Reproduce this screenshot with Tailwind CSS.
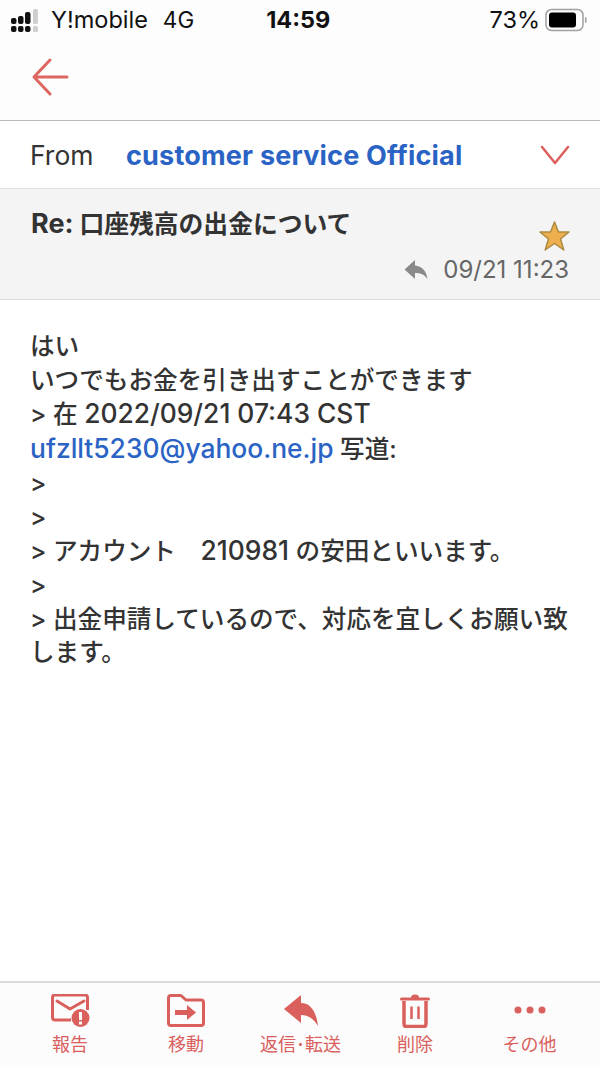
<!DOCTYPE html>
<html lang="ja"><head><meta charset="utf-8">
<script src="https://cdn.jsdelivr.net/npm/@tailwindcss/browser@4"></script>
</head>
<body class="m-0 bg-white">
<div class="w-[600px] h-[1065px] flex flex-col overflow-hidden bg-white text-[#333] font-['Inter','Noto_Sans_CJK_JP',sans-serif]">
  <div class="h-[121px] shrink-0 bg-[#fdfdfd] border-b border-[#b8b8b8] flex flex-col">
    <div class="h-[40px] relative flex items-center text-[#111]">
      <div class="ml-[11px] mt-[1px] w-[27px] shrink-0">
        <svg width="27" height="24" viewBox="0 0 27 24"><g fill="#111"><rect x="0" y="9" width="5.500" height="6" rx="2"/><rect x="0" y="17" width="5.500" height="6" rx="2"/><rect x="7" y="7" width="5.500" height="8" rx="2"/><rect x="7" y="17" width="5.500" height="6" rx="2"/><rect x="14" y="3" width="5.500" height="12" rx="2"/><rect x="14" y="17" width="5.500" height="6" rx="2"/></g><rect x="22" y="0" width="5" height="15" rx="1.500" fill="#cfcfcf"/><rect x="22" y="17" width="5" height="6" rx="1.500" fill="#cfcfcf"/></svg>
      </div>
      <span class="ml-[13px] text-[23.500px] leading-none">Y!mobile</span>
      <span class="ml-[15px] text-[22.500px] leading-none">4G</span>
      <span class="ml-[72px] text-[23.500px] leading-none font-bold">14:59</span>
      <span class="ml-auto text-[23.500px] leading-none">73%</span>
      <svg class="ml-[5px] mr-[11px]" width="44" height="24" viewBox="0 0 44 24"><rect x="1" y="1.500" width="37" height="21" rx="5.500" fill="none" stroke="#a0a0a0" stroke-width="1.500"/><rect x="4" y="4.500" width="27" height="15" rx="3" fill="#000"/><rect x="40" y="9" width="1.500" height="6" rx="0.750" fill="#a0a0a0"/></svg>
    </div>
    <div class="pl-[31px] pt-[17px]">
      <svg width="40" height="40" viewBox="0 0 40 40" fill="none" stroke="#dd6660" stroke-width="3" stroke-linecap="round" stroke-linejoin="round"><path d="M3 20H36M19 3L3 20L19 37"/></svg>
    </div>
  </div>
  <div class="h-[68px] shrink-0 bg-white border-b border-[#e0e0e0] flex items-center pl-[30px] pr-[30px] pt-[1px]">
    <span class="w-[96px] text-[26.500px] leading-none text-[#333]">From</span>
    <span class="text-[27px] leading-none font-bold text-[#2a63c4] tracking-[0.2px]">customer service Official</span>
    <svg class="ml-auto" width="30" height="20" viewBox="0 0 30 20" fill="none" stroke="#dd5f5c" stroke-width="2.500" stroke-linecap="round" stroke-linejoin="round"><path d="M2 2L15 18L28 2"/></svg>
  </div>
  <div class="h-[111px] shrink-0 bg-[#f4f4f4] border-b border-[#dcdcdc] flex flex-col pl-[31px] pr-[31px]">
    <div class="flex items-start">
      <span class="mt-[18px] text-[24.800px] leading-[33px] font-bold text-[#333]"><span class="text-[27px]">Re:</span> 口座残高の出金について</span>
      <svg class="ml-auto mt-[31px] -mr-[1px]" width="31" height="32" viewBox="0 0 31 32"><path d="M15.500 2L19.500 12H30L21.500 19L24.800 30L15.500 23.500L6.200 30L9.500 19L1 12H11.500Z" fill="#eeb04f" stroke="#ac8a40" stroke-width="1.500" stroke-linejoin="round"/></svg>
    </div>
    <div class="flex items-center justify-end mt-[3px]">
      <svg class="mr-[15px]" width="24" height="22" viewBox="0 0 24 22"><path d="M0.500 10.500L11 1V6.500C18 7 22.500 12 23.500 20C20.500 15.500 16.500 14 11 14V20Z" fill="#8a8a8a"/></svg>
      <span class="text-[24px] leading-[30px] text-[#666]">09/21 11:23</span>
    </div>
  </div>
  <div class="flex-1 pt-[30px] pl-[30px] pr-[28px] text-[24.600px] leading-[33.700px] font-medium text-[#333]">
    <div>はい</div>
    <div>いつでもお金を引き出すことができます</div>
    <div>&gt; 在 <span class="text-[26.400px]">2022/09/21 07:43 CST</span></div>
    <div><span class="text-[26.400px] text-[#2a63c4]">ufzllt5230@yahoo.ne.jp</span> 写道:</div>
    <div>&gt;</div>
    <div>&gt;</div>
    <div>&gt; アカウント　<span class="text-[26.400px]">210981</span> の安田といいます。</div>
    <div>&gt;</div>
    <div>&gt; 出金申請しているので、対応を宜しくお願い致します。</div>
  </div>
  <div class="h-[84px] shrink-0 bg-[#fcfcfc] border-t-2 border-[#dadada] flex text-[#d9605c] text-[18px] leading-[22px]">
    <div class="w-[140px] flex flex-col items-center pt-[11px]">
      <svg class="h-[34px] ml-[1px]" width="40" height="34" viewBox="0 0 40 34" fill="none"><path d="M20 26H4C2.500 26 1.500 25 1.500 23.500V3.500C1.500 2 2.500 1 4 1H34C35.500 1 36.500 2 36.500 3.500V16" stroke="#d9605c" stroke-width="3"/><path d="M6 7L19 15L33 7" stroke="#d9605c" stroke-width="3" stroke-linecap="round" stroke-linejoin="round"/><circle cx="29.500" cy="24" r="9" fill="#d9605c"/><rect x="28" y="18" width="3" height="8" fill="#fcfcfc"/><rect x="28" y="27.500" width="3" height="3" fill="#fcfcfc"/></svg>
      <span class="mt-[6px]">報告</span>
    </div>
    <div class="w-[92px] flex flex-col items-center pt-[11px]">
      <svg class="h-[34px]" width="38" height="34" viewBox="0 0 38 34" fill="none"><path d="M1.500 4C1.500 2.500 2.500 1.500 4 1.500H14L19 6H34C35.500 6 36.500 7 36.500 8.500V29C36.500 30.500 35.500 31.500 34 31.500H4C2.500 31.500 1.500 30.500 1.500 29Z" stroke="#d9605c" stroke-width="3" stroke-linejoin="round"/><path d="M8 16H20V11L29 18.500L20 26V21H8Z" fill="#d9605c"/></svg>
      <span class="mt-[6px]">移動</span>
    </div>
    <div class="w-[137px] flex flex-col items-center pt-[11px]">
      <svg class="h-[34px]" width="34" height="34" viewBox="0 0 34 34"><path d="M0 15L17 1V9C25 9 32 15 34 32C29 24 24 21 17 21V29Z" fill="#d9605c"/></svg>
      <span class="mt-[6px]">返信･転送</span>
    </div>
    <div class="w-[92px] flex flex-col items-center pt-[10px]">
      <svg class="h-[35px]" width="30" height="35" viewBox="0 0 30 35" fill="none"><path d="M1.500 6H28.500" stroke="#d9605c" stroke-width="3" stroke-linecap="round"/><path d="M11 5C11 2.500 12.500 1.500 15 1.500C17.500 1.500 19 2.500 19 5" fill="#d9605c"/><path d="M4 8V31C4 32.500 5 33.500 6.500 33.500H23.500C25 33.500 26 32.500 26 31V8" stroke="#d9605c" stroke-width="3.500"/><path d="M11.500 13.500V26M18.500 13.500V26" stroke="#d9605c" stroke-width="2.500"/></svg>
      <span class="mt-[6px]">削除</span>
    </div>
    <div class="w-[137px] flex flex-col items-center pt-[23px]">
      <svg class="h-[8px] mb-[15px]" width="32" height="8" viewBox="0 0 32 8"><circle cx="4" cy="4" r="3.500" fill="#d9605c"/><circle cx="16" cy="4" r="3.500" fill="#d9605c"/><circle cx="28" cy="4" r="3.500" fill="#d9605c"/></svg>
      <span class="mt-[5px]">その他</span>
    </div>
  </div>
</div>
</body></html>
